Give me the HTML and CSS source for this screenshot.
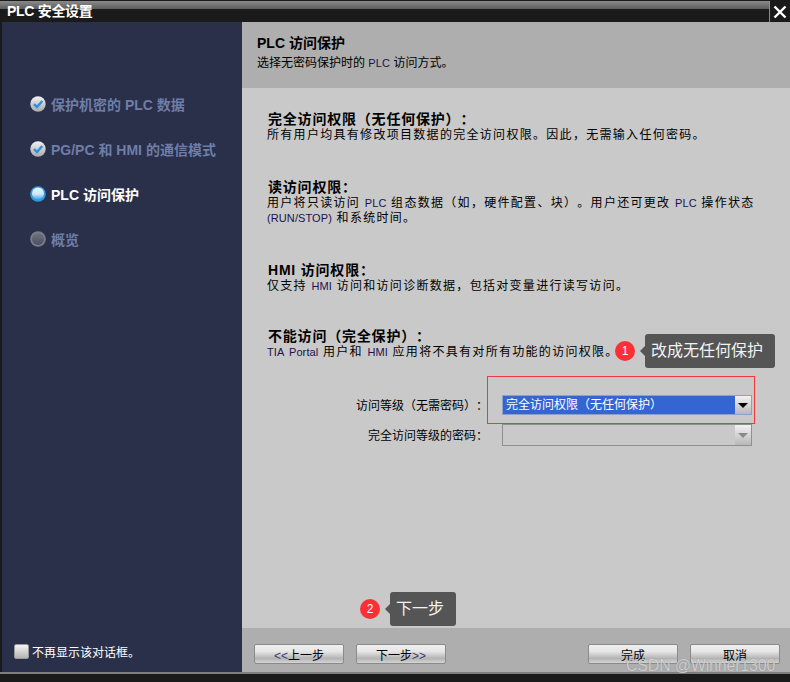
FILE: index.html
```html
<!DOCTYPE html>
<html lang="en">
<head>
    <meta charset="UTF-8">
    <title>PLC 安全设置</title>
    <link rel="stylesheet" href="styles.css">
</head>
<body>
    <div class="window">
        <div class="titlebar">
            <span class="title">PLC 安全设置</span>
            <span class="close">
                <svg width="14" height="14" viewBox="0 0 14 14"><path d="M1.5 1.5L12.5 12.5M12.5 1.5L1.5 12.5" stroke="#fff" stroke-width="2.4" fill="none"/></svg>
            </span>
        </div>

        <div class="main">
            <div class="sidebar">
                <ul class="steps">
                    <li class="step">
                        <svg class="bullet" width="16" height="16" viewBox="0 0 16 16"><defs><linearGradient id="chk" x1="0" y1="0" x2="0" y2="1"><stop offset="0" stop-color="#f2f2f2"/><stop offset="1" stop-color="#a9a9a9"/></linearGradient></defs><circle cx="8" cy="8" r="7.7" fill="url(#chk)"/><path d="M4 8.2L7 11L12.3 5" stroke="#2f8fe0" stroke-width="2.4" fill="none"/></svg>
                        <span>保护机密的 PLC 数据</span>
                    </li>
                    <li class="step">
                        <svg class="bullet" width="16" height="16" viewBox="0 0 16 16"><circle cx="8" cy="8" r="7.7" fill="url(#chk)"/><path d="M4 8.2L7 11L12.3 5" stroke="#2f8fe0" stroke-width="2.4" fill="none"/></svg>
                        <span>PG/PC 和 HMI 的通信模式</span>
                    </li>
                    <li class="step current">
                        <svg class="bullet" width="16" height="16" viewBox="0 0 16 16"><defs><linearGradient id="cur" x1="0" y1="0" x2="0" y2="1"><stop offset="0" stop-color="#e8f4fc"/><stop offset="0.55" stop-color="#cfe6f6"/><stop offset="1" stop-color="#3aa3e6"/></linearGradient></defs><circle cx="8" cy="8" r="7.8" fill="#2f9ae0"/><circle cx="8" cy="7.6" r="6" fill="url(#cur)"/></svg>
                        <span>PLC 访问保护</span>
                    </li>
                    <li class="step">
                        <svg class="bullet" width="16" height="16" viewBox="0 0 16 16"><defs><linearGradient id="off" x1="0" y1="0" x2="0" y2="1"><stop offset="0" stop-color="#71747f"/><stop offset="1" stop-color="#4a4e5e"/></linearGradient></defs><circle cx="8" cy="8" r="7.8" fill="#7b7e88"/><circle cx="8" cy="8" r="6" fill="url(#off)"/></svg>
                        <span>概览</span>
                    </li>
                </ul>
                <label class="dont-show"><span class="checkbox"></span>不再显示该对话框。</label>
            </div>

            <div class="panel">
                <div class="panel-head">
                    <div class="head-title">PLC 访问保护</div>
                    <div class="head-sub">选择无密码保护时的 <span class="latin">PLC</span> 访问方式。</div>
                </div>

                <div class="panel-body">
                    <div class="block">
                        <h3>完全访问权限&#xFF08;无任何保护&#xFF09;&#xFF1A;</h3>
                        <p>所有用户均具有修改项目数据的完全访问权限。因此&#xFF0C;无需输入任何密码。</p>
                    </div>
                    <div class="block">
                        <h3>读访问权限&#xFF1A;</h3>
                        <p>用户将只读访问 <span class="latin">PLC</span> 组态数据&#xFF08;如&#xFF0C;硬件配置、块&#xFF09;。用户还可更改 <span class="latin">PLC</span> 操作状态<br><span class="latin">(RUN/STOP)</span> 和系统时间。</p>
                    </div>
                    <div class="block tight">
                        <h3>HMI 访问权限&#xFF1A;</h3>
                        <p>仅支持 <span class="latin">HMI</span> 访问和访问诊断数据&#xFF0C;包括对变量进行读写访问。</p>
                    </div>
                    <div class="block">
                        <h3>不能访问&#xFF08;完全保护&#xFF09;&#xFF1A;</h3>
                        <p><span class="latin">TIA Portal</span> 用户和 <span class="latin">HMI</span> 应用将不具有对所有功能的访问权限。</p>
                    </div>

                    <div class="form">
                        <div class="form-row">
                            <span class="form-label">访问等级&#xFF08;无需密码&#xFF09;&#xFF1A;</span>
                            <div class="combo active">
                                <span class="combo-value">完全访问权限&#xFF08;无任何保护&#xFF09;</span>
                                <span class="combo-btn"><i class="arrow"></i></span>
                            </div>
                        </div>
                        <div class="form-row">
                            <span class="form-label">完全访问等级的密码&#xFF1A;</span>
                            <div class="combo">
                                <span class="combo-value"></span>
                                <span class="combo-btn"><i class="arrow"></i></span>
                            </div>
                        </div>
                    </div>
                </div>

                <div class="panel-foot">
                    <div class="btn-group">
                        <button class="btn"><span class="chev">&lt;&lt;</span>上一步</button>
                        <button class="btn">下一步<span class="chev">&gt;&gt;</span></button>
                    </div>
                    <div class="btn-group">
                        <button class="btn">完成</button>
                        <button class="btn">取消</button>
                    </div>
                </div>

                <!-- annotations on top of the screenshot -->
                <div class="highlight"></div>
                <div class="note note-one"><span class="badge">1</span><span class="tip">改成无任何保护</span></div>
                <div class="note note-two"><span class="badge">2</span><span class="tip">下一步</span></div>
            </div>
        </div>

        <div class="bottom"></div>
        <div class="watermark">CSDN @Winner1300</div>
    </div>
</body>
</html>
```

FILE: styles.css
```css
* {
    box-sizing: border-box;
}
html, body {
    margin: 0;
    padding: 0;
}
body {
    width: 790px;
    height: 682px;
    overflow: hidden;
    background-color: #1a1a1a;
    font-family: "Liberation Sans", "Noto Sans CJK SC", sans-serif;
    font-size: 12px;
    color: #000;
    text-spacing-trim: space-all;
}
.window {
    position: relative;
    width: 790px;
    height: 682px;
    display: flex;
    flex-direction: column;
    background-color: #1a1a1a;
}
.titlebar {
    height: 22px;
    display: flex;
    justify-content: space-between;
    background: linear-gradient(#1a1a1a 0, #1a1a1a 1px, #8a8a8a 1px, #5c5c5c 9px, #1a1a1a 9px);
}
.title {
    padding: 2px 0 0 7px;
    font-size: 14px;
    line-height: 18px;
    font-weight: bold;
    letter-spacing: -0.3px;
    color: #fff;
}
.close {
    width: 21px;
    height: 21px;
    display: flex;
    align-items: center;
    justify-content: center;
    border-left: 1px solid #8c8c8c;
    background-color: #1a1a1a;
    margin-top: 1px;
}
.main {
    height: 650px;
    display: flex;
    padding: 0 0 0 2px;
}
.sidebar {
    width: 240px;
    display: flex;
    flex-direction: column;
    justify-content: space-between;
    background-color: #2a2f4a;
}
.steps {
    list-style: none;
    margin: 0;
    padding: 59px 0 0 28px;
}
.step {
    height: 45px;
    display: flex;
    align-items: center;
    gap: 5px;
    font-size: 14px;
    font-weight: bold;
    color: #6e7ea8;
}
.step.current {
    color: #fff;
}
.dont-show {
    display: flex;
    align-items: center;
    gap: 3px;
    padding: 0 0 12px 12px;
    font-size: 12px;
    color: #fff;
}
.checkbox {
    width: 15px;
    height: 15px;
    border: 1px solid #9a9a9a;
    border-radius: 2px;
    background: linear-gradient(#f4f4f4, #b4b4b4);
}
.panel {
    position: relative;
    flex: 1;
    display: flex;
    flex-direction: column;
    background-color: #c9c9c9;
}
.panel-head {
    height: 66px;
    padding: 12px 0 0 15px;
    background-color: #aeaeae;
}
.head-title {
    font-size: 14px;
    line-height: 18px;
    font-weight: bold;
}
.head-sub {
    margin-top: 3px;
    line-height: 16px;
}
.panel-body {
    flex: 1;
    padding: 23px 0 0 25px;
}
.block {
    margin-bottom: 36px;
}
.block.tight {
    margin-bottom: 34px;
}
.block h3 {
    margin: 0;
    padding-left: 1px;
    font-size: 14px;
    line-height: 17px;
    font-weight: bold;
    letter-spacing: 0.8px;
}
.block p {
    margin: 0;
    line-height: 15px;
    letter-spacing: 1.3px;
}
.latin {
    font-size: 11px;
    color: #1c1050;
    letter-spacing: 0.1px;
    word-spacing: 2px;
}
.form {
    margin-top: -3px;
}
.form-row {
    display: flex;
    justify-content: flex-end;
    align-items: center;
    height: 22px;
    margin-bottom: 8px;
    padding-right: 38px;
}
.form-label {
    margin-right: 14px;
    white-space: nowrap;
}
.combo {
    width: 250px;
    height: 22px;
    margin-top: 2px;
    display: flex;
    border: 1px solid #8f8f8f;
    background-color: #c9c9c9;
}
.combo-value {
    flex: 1;
    padding-left: 3px;
    line-height: 18px;
}
.combo.active {
    height: 20px;
    border-color: #8da0c8;
}
.combo.active .combo-value {
    background-color: #3465d2;
    color: #fff;
}
.combo-btn {
    width: 16px;
    display: flex;
    align-items: center;
    justify-content: center;
    background: linear-gradient(#f2f2f2, #b8b8b8);
}
.arrow {
    width: 0;
    height: 0;
    border-left: 5px solid transparent;
    border-right: 5px solid transparent;
    border-top: 5px solid #8a8a8a;
}
.active .arrow {
    border-top-color: #000;
}
.panel-foot {
    height: 44px;
    display: flex;
    justify-content: space-between;
    padding: 16px 10px 0 12px;
    background-color: #aeaeae;
}
.btn-group {
    display: flex;
    gap: 12px;
}
.btn {
    width: 90px;
    height: 20px;
    padding: 0;
    font-family: inherit;
    font-size: 12px;
    color: #000;
    border: 1px solid #8a8a8a;
    border-radius: 2px;
    background: linear-gradient(#f0f0f0, #e6e6e6 35%, #b4b4b4 75%, #d4d4d4);
}
.chev {
    color: #3a3a70;
}
.bottom {
    height: 2px;
    background-color: #7e7e7e;
}
.highlight {
    position: absolute;
    left: 245px;
    top: 354px;
    width: 268px;
    height: 48px;
    border: 1px solid #f0383c;
}
.note {
    position: absolute;
    display: flex;
    align-items: center;
    gap: 10px;
}
.note-one {
    left: 373px;
    top: 312px;
}
.note-two {
    left: 118px;
    top: 570px;
}
.badge {
    width: 20px;
    height: 20px;
    border-radius: 50%;
    background-color: #fb3036;
    color: #fff;
    font-size: 12px;
    line-height: 20px;
    text-align: center;
}
.tip {
    position: relative;
    padding: 0 12px 0 6px;
    height: 34px;
    line-height: 34px;
    font-size: 16px;
    color: #f2f2f2;
    background-color: #555;
    border-radius: 3px;
}
.tip::before {
    content: "";
    position: absolute;
    left: -5px;
    top: 12px;
    border-top: 5px solid transparent;
    border-bottom: 5px solid transparent;
    border-right: 5px solid #555;
}
.watermark {
    position: absolute;
    left: 626px;
    top: 657px;
    font-size: 16px;
    line-height: 18px;
    letter-spacing: -0.2px;
    color: #d8d8d8;
    opacity: 0.75;
    text-shadow: 0 0 1px #777;
}
```
